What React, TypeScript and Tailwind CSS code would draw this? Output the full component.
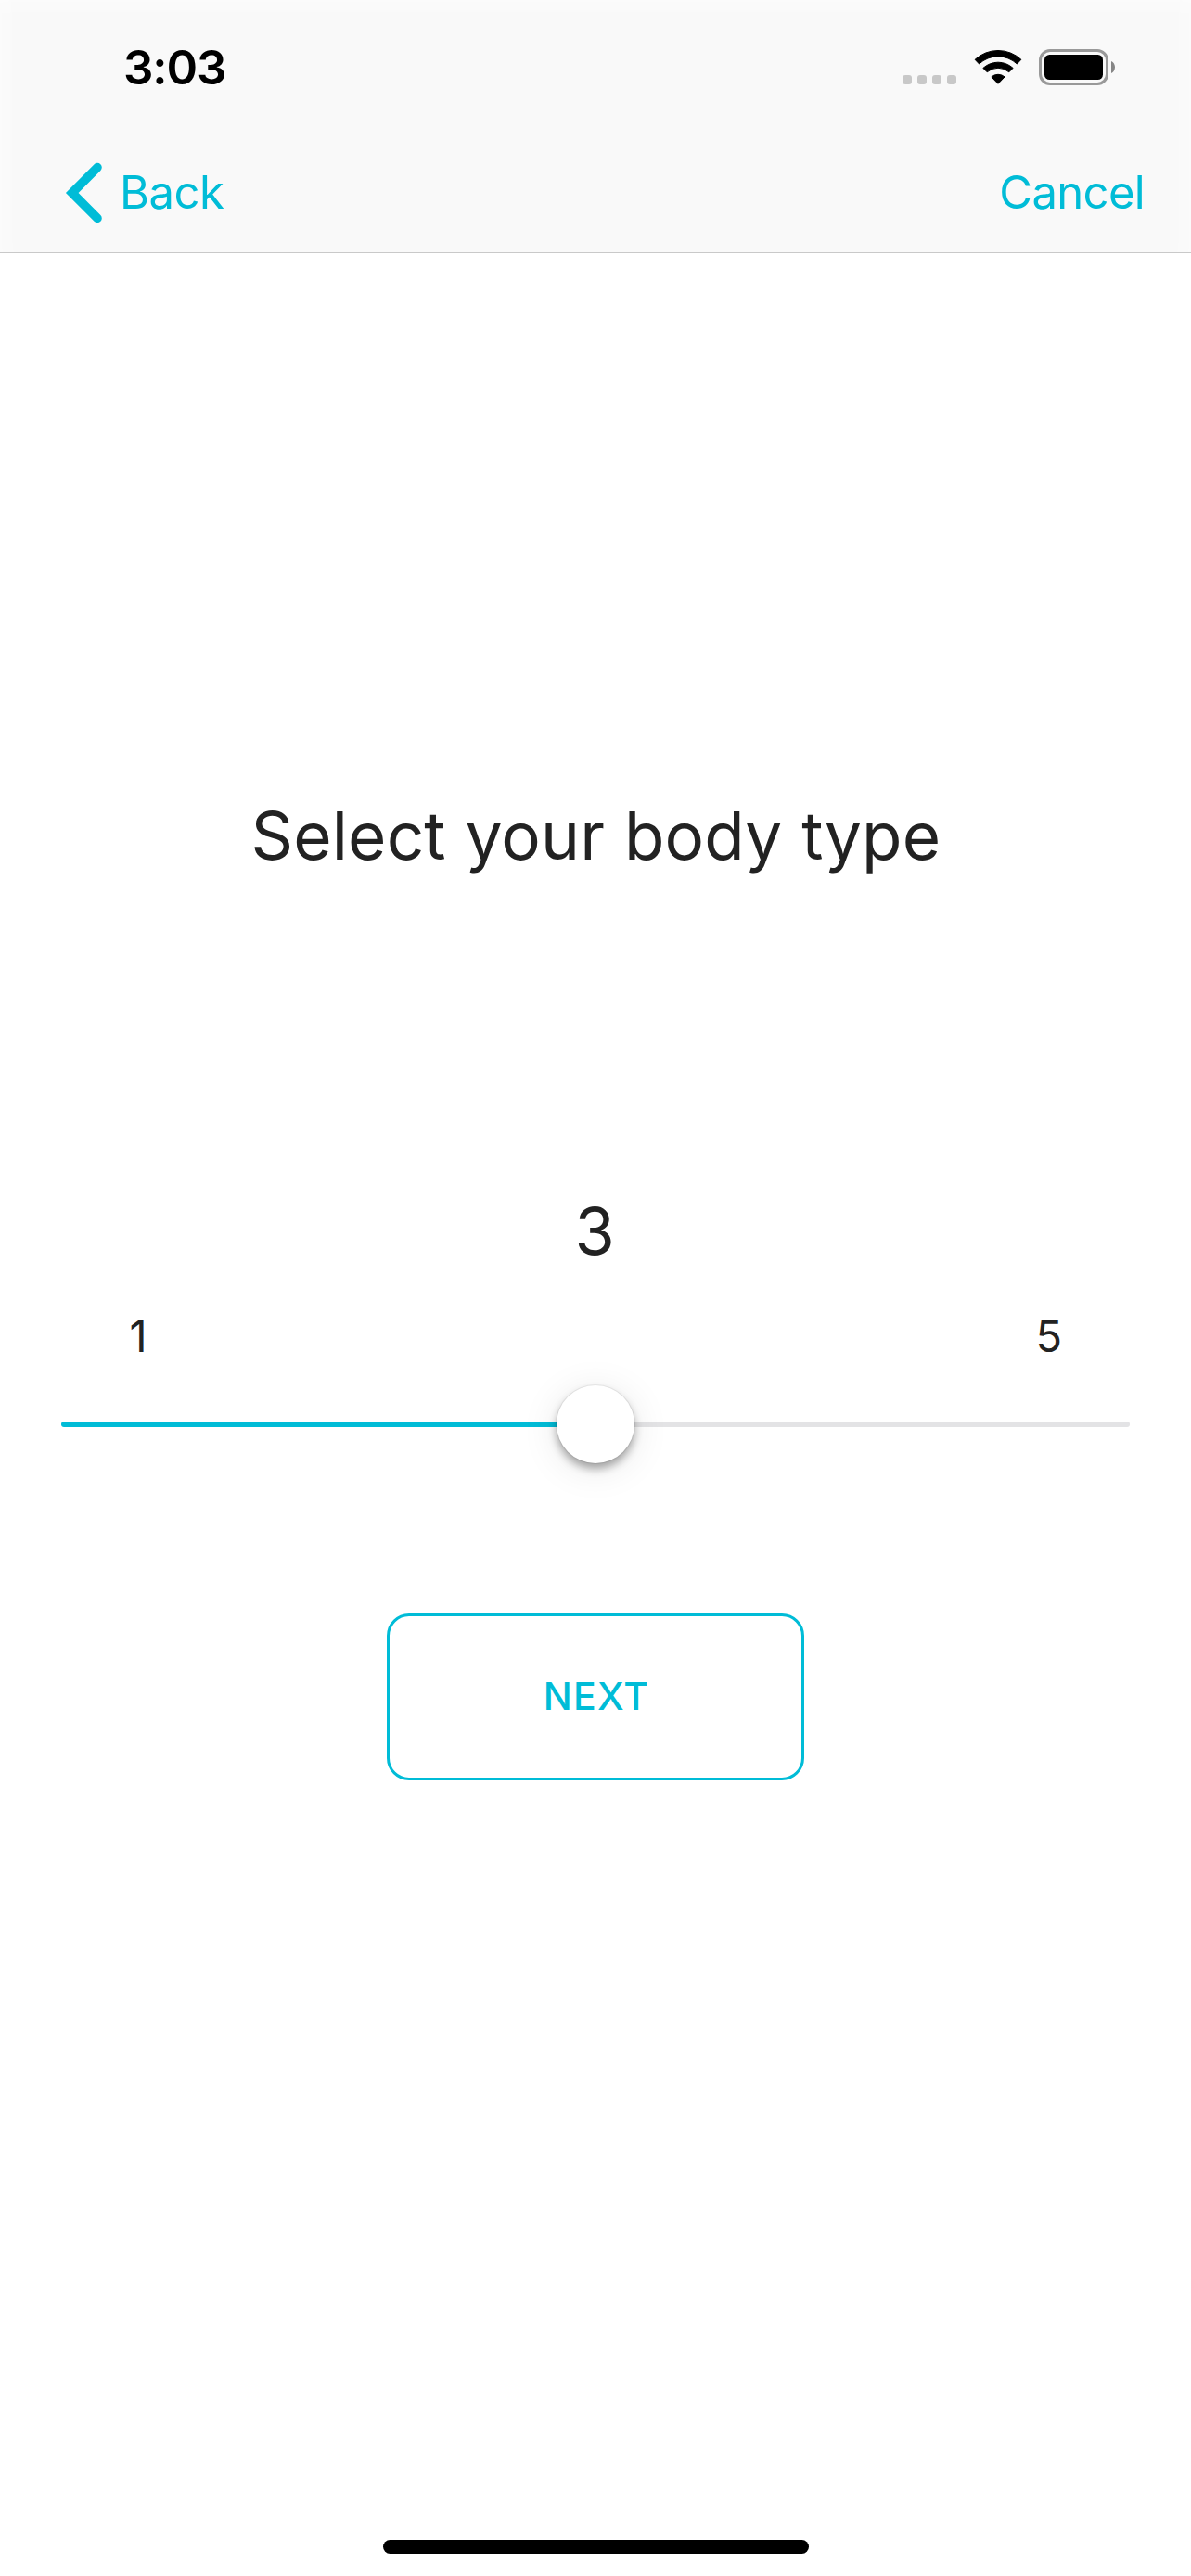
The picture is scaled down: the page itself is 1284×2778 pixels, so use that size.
function WifiIcon() {
  return (
    <svg width="52" height="39" viewBox="-26 -38 52 39" className="ml-[18.5px] shrink-0">
      <g fill="#000" stroke="#000" strokeWidth="1" strokeLinejoin="round">
        <path d="M-24.9 -26.7A36.5 36.5 0 0 1 24.9 -26.7L20.4 -22A29.8 29.8 0 0 0 -20.4 -22Z" />
        <path d="M-16.1 -17.6A24 24 0 0 1 16.1 -17.6L11.8 -13.2A17.6 17.6 0 0 0 -11.8 -13.2Z" />
        <path d="M-7.1 -8.1A11 11 0 0 1 7.1 -8.1L0 -0.7Z" />
      </g>
    </svg>
  );
}

function BatteryIcon() {
  return (
    <div className="ml-[18.5px] flex items-center">
      <div className="h-[39px] w-[75px] rounded-[12px] border-3 border-[#999999] p-[3px]">
        <div className="h-full w-full rounded-[5.5px] bg-black" />
      </div>
      <svg width="4" height="13" viewBox="0 0 4 13" className="ml-[3px] shrink-0">
        <path d="M0 0C2.4 1.1 4 3.6 4 6.5S2.4 11.9 0 13Z" fill="#868686" />
      </svg>
    </div>
  );
}

function StatusBar() {
  return (
    <div className="flex h-[145px] items-center justify-between pr-[82px] pl-[133px]">
      <span className="text-[51px] leading-none font-semibold tracking-[-1.1px] text-black">3:03</span>
      <div className="flex h-10 items-center">
        <div className="flex gap-1.5 pt-[27px]">
          {[0, 1, 2, 3].map((i) => (
            <span key={i} className="size-[10px] rounded-[3px] bg-[#c8c8c8]" />
          ))}
        </div>
        <WifiIcon />
        <BatteryIcon />
      </div>
    </div>
  );
}

function NavBar() {
  return (
    <div className="flex h-[125px] items-center justify-between pr-[50px] pl-[69px] text-[49px] leading-none text-[#00bcd7]">
      <button className="flex items-center tracking-[-0.5px]">
        <svg width="42" height="66" viewBox="0 0 42 66" fill="none" className="mr-[18px] shrink-0">
          <path d="M36 5.6L8.7 33L36 60.4" stroke="currentColor" strokeWidth="9.6" strokeLinecap="round" />
        </svg>
        Back
      </button>
      <button className="tracking-[-0.66px]">Cancel</button>
    </div>
  );
}

function Slider() {
  return (
    <div className="mx-[66px] flex h-[86px] items-center">
      <div className="h-1.5 flex-1 rounded-l-full bg-[#00bcd7]" />
      <div className="relative z-10 size-[84px] rounded-full bg-white shadow-[0_0_0_1px_rgba(0,0,0,0.06),0_6px_10px_rgba(0,0,0,0.33),0_6px_40px_rgba(0,0,0,0.1)]" />
      <div className="h-1.5 flex-1 rounded-r-full bg-[#e3e3e5]" />
    </div>
  );
}

export default function App() {
  return (
    <div className="flex h-[2778px] w-[1284px] flex-col bg-white font-['Inter',sans-serif] text-[#222222]">
      <header className="h-[273px] border-b border-[#c9c9c9] bg-[#f9f9f9] shadow-[inset_30px_0_30px_-25px_rgba(255,255,255,0.5),inset_-30px_0_30px_-25px_rgba(255,255,255,0.5),inset_0_30px_30px_-25px_rgba(255,255,255,0.5)]">
        <StatusBar />
        <NavBar />
      </header>

      <main className="flex flex-1 flex-col">
        <h1 className="mt-[578px] h-[100px] pl-[270.5px] text-[71px] leading-[100px] tracking-[0.15px] whitespace-nowrap [word-spacing:0.8px]">
          Select your body type
        </h1>
        <p className="mt-[327px] pl-[619.5px] text-[70px] leading-[100px]">3</p>
        <div className="mt-[33px] flex justify-between pr-[139px] pl-[139.5px] text-[47px] leading-[60px]">
          <span>1</span>
          <span>5</span>
        </div>
        <div className="mt-[22px]">
          <Slider />
        </div>
        <button className="mt-[161px] ml-[417px] h-[180px] w-[450px] rounded-[24px] border-3 border-[#00bcd7] pb-0.5 pl-0.5 text-[41px] leading-none font-medium tracking-[1.2px] text-[#00bcd7]">
          NEXT
        </button>
      </main>

      <div className="mb-6 ml-[413px] h-[15px] w-[459px] rounded-full bg-black" />
    </div>
  );
}
